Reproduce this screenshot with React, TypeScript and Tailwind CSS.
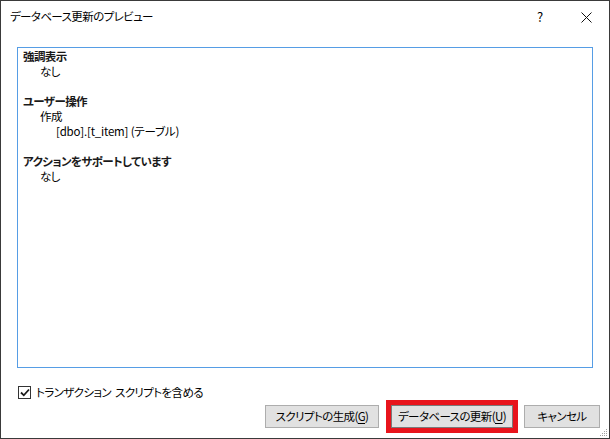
import React from 'react'

// Preview dialog for a database update (SSDT-style), Windows 10 chrome
const FONT = "[font-family:'Noto_Sans_CJK_JP','Noto_Sans',sans-serif] [font-feature-settings:'palt']"

function Section({ title, children }: { title: string; children: React.ReactNode }) {
  return (
    <div className="mb-[15px]">
      <div className="font-bold text-[#1a1a1a] text-[11.5px]">{title}</div>
      {children}
    </div>
  )
}

function WinButton({
  label, accel, width, isDefault, highlighted,
}: {
  label: string
  accel: string
  width: number
  isDefault?: boolean
  highlighted?: boolean
}) {
  const widthCls = width === 114 ? 'w-[114px]' : width === 122 ? 'w-[122px]' : 'w-[76px]'
  return (
    <button
      className={`relative ${widthCls} h-[23px] bg-[#e1e1e1] border ${isDefault ? 'border-[#7a7a7a]' : 'border-[#adadad]'} text-[11.5px] leading-none text-black flex items-center justify-center whitespace-nowrap`}
    >
      <span>
        {label}
        {accel && (
          <>
            (<span className="underline underline-offset-2">{accel}</span>)
          </>
        )}
      </span>
      {highlighted && (
        <span className="pointer-events-none absolute -inset-[6px] border-[5px] border-[#e8141c]" />
      )}
    </button>
  )
}

export default function App() {
  return (
    <div className={`relative w-[610px] h-[439px] bg-white border border-[#3a3a3a] flex flex-col ${FONT} text-[11.5px] tracking-[-0.6px] text-black`}>
      {/* title bar */}
      <div className="h-[31px] flex items-center shrink-0">
        <div className="pl-[9px] flex-1 pt-px">データベース更新のプレビュー</div>
        <div className="w-[46px] h-full flex items-center justify-center text-[13px] tracking-normal">?</div>
        <div className="w-[46px] h-full flex items-center justify-center">
          <svg width="11" height="11" viewBox="0 0 11 11" className="mt-px">
            <path d="M0.5 0.5 L10.5 10.5 M10.5 0.5 L0.5 10.5" stroke="#111" strokeWidth="1" />
          </svg>
        </div>
      </div>

      {/* preview text */}
      <div className="px-4 pt-[15px]">
        <div className="h-[321px] border border-[#569de5] bg-white pl-[5px] pt-px leading-[15px]">
          <Section title="強調表示">
            <div className="pl-[17px]">なし</div>
          </Section>
          <Section title="ユーザー操作">
            <div className="pl-[17px]">作成</div>
            <div className="pl-[33px] tracking-[-0.2px]">[dbo].[t_item] (テーブル)</div>
          </Section>
          <Section title="アクションをサポートしています">
            <div className="pl-[17px]">なし</div>
          </Section>
        </div>
      </div>

      {/* include transaction script */}
      <div className="mt-[18px] pl-[17px] flex items-center gap-[5px] h-[13px]">
        <span className="w-[13px] h-[13px] border border-[#333] bg-white flex items-center justify-center">
          <svg width="10" height="9" viewBox="0 0 10 9">
            <path d="M1 4.5 L3.8 7.3 L9 1.5" fill="none" stroke="#1a1a1a" strokeWidth="1.8" />
          </svg>
        </span>
        <span>
          トランザクション<span className="inline-block w-[4px]" />スクリプトを含める
        </span>
      </div>

      {/* buttons */}
      <div className="mt-[6px] flex justify-end pr-[9px]">
        <WinButton label="スクリプトの生成" accel="G" width={114} />
        <div className="ml-[12px]">
          <WinButton label="データベースの更新" accel="U" width={122} isDefault highlighted />
        </div>
        <div className="ml-[11px]">
          <WinButton label="キャンセル" accel="" width={76} />
        </div>
      </div>

      {/* size grip */}
      <svg className="absolute right-[1px] bottom-[1px]" width="10" height="10" viewBox="0 0 10 10">
        {[[8, 2], [6, 4], [8, 4], [4, 6], [6, 6], [8, 6], [2, 8], [4, 8], [6, 8], [8, 8]].map(([x, y], i) => (
          <rect key={i} x={x} y={y} width="1" height="1" fill="#a0a0a0" />
        ))}
      </svg>
    </div>
  )
}
